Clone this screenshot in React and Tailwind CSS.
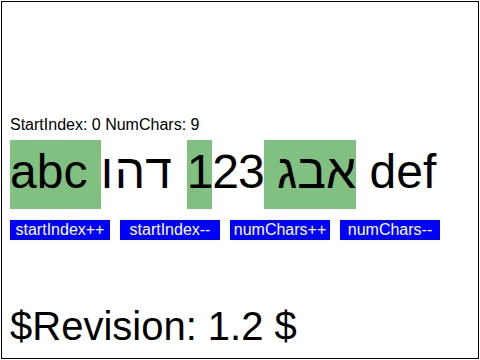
export default function App() {
  const hl = "bg-[#80c080] pt-[5px] pb-[11px]";
  return (
    <div className="w-[480px] h-[360px] bg-white pt-px pl-px text-black font-['Liberation_Sans','DejaVu_Sans',sans-serif]">
      <div className="w-[478px] h-[358px] border border-black pl-[8px] pt-[114px]">
        <div className="h-[18px] leading-[18px] text-[16px] whitespace-pre">StartIndex: 0 NumChars: 9</div>
        <div className="mt-[13px] h-[49px] leading-[49px] text-[48px] whitespace-pre">
          <span className={hl}>{"abc "}</span><span className={hl}>{"אבג "}</span><span className={`${hl} tracking-[-1px]`}>{"1"}</span><span className="tracking-[-1px]">{"23"}</span><span>{" "}</span><span className="tracking-[1.5px]">{"דהו"}</span><span>{" def"}</span>
        </div>
        <div className="mt-[24px] flex gap-[10px]">
          {["startIndex++", "startIndex--", "numChars++", "numChars--"].map((t) => (
            <div key={t} className="w-[100px] h-[20px] bg-[#0000ff] text-white text-[16px] leading-[18px] flex items-center justify-center whitespace-pre">
              {t}
            </div>
          ))}
        </div>
        <div className="mt-[66px] h-[40px] leading-[40px] text-[40px] whitespace-pre">$Revision: 1.2 $</div>
      </div>
    </div>
  );
}
